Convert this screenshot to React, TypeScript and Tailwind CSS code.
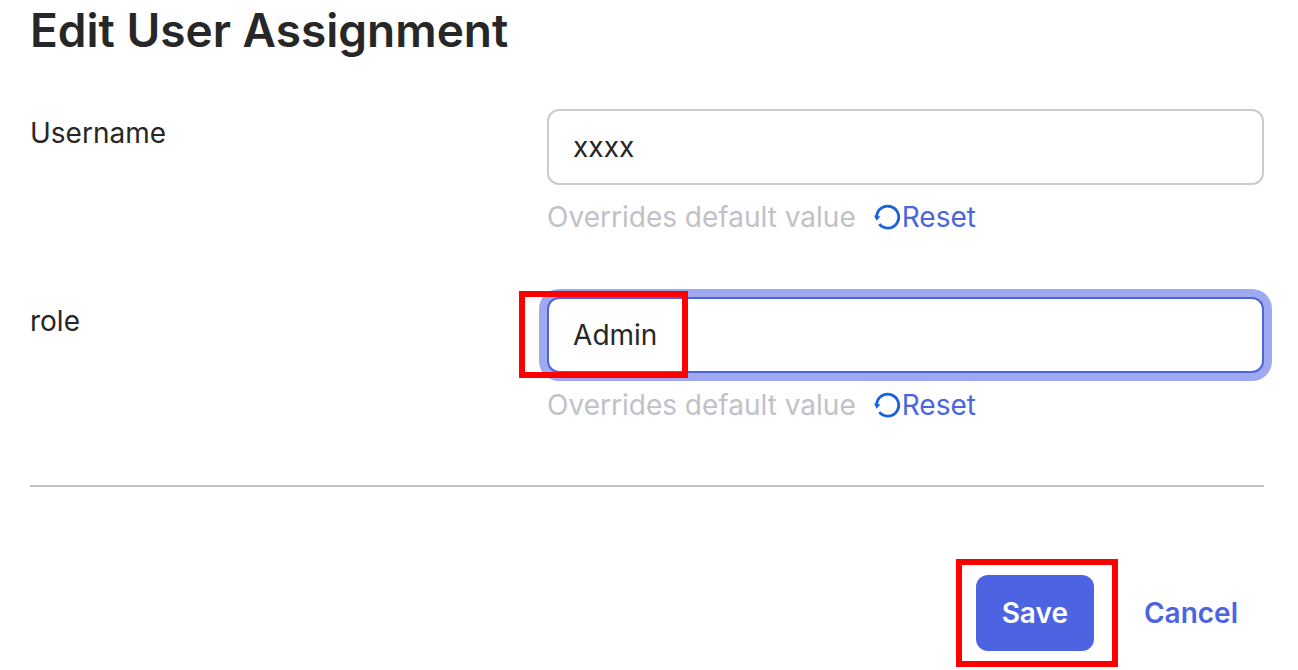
import React, { useState } from "react";

type FieldProps = {
  id: string;
  label: string;
  defaultValue: string;
  focused?: boolean;
  children?: React.ReactNode;
};

function ResetIcon() {
  return (
    <svg
      width="28"
      height="28"
      viewBox="0 0 28 28"
      fill="none"
      aria-hidden="true"
      className="shrink-0"
    >
      <path
        d="M2.7 14A11 11 0 1 1 5.3 21.2"
        stroke="#1662dd"
        strokeWidth="2.8"
      />
      <path d="M0 12.6L6.4 13.6L2.6 17.8Z" fill="#1662dd" />
    </svg>
  );
}

function Field({ id, label, defaultValue, focused, children }: FieldProps) {
  const [value, setValue] = useState(defaultValue);

  return (
    <div className="grid grid-cols-[5fr_7fr] gap-x-[5px]">
      <label htmlFor={id} className="pt-1.5 leading-9">
        {label}
      </label>
      <div>
        <div className="relative">
          <input
            id={id}
            type="text"
            value={value}
            onChange={(e) => setValue(e.target.value)}
            className={`block h-19 w-full rounded-xl border-2 bg-white px-6 outline-none ${
              focused
                ? "border-[#4c64e1] ring-8 ring-[#9ea9f0]"
                : "border-[#cbcbcb]"
            }`}
          />
          {children}
        </div>
        <div className="mt-3.5 flex items-center gap-[18px]">
          <span className="leading-9 text-[#c1c1c8]">
            Overrides default value
          </span>
          <button
            type="button"
            onClick={() => setValue(defaultValue)}
            className="flex items-center leading-9 text-[#4c64e1]"
          >
            <ResetIcon />
            Reset
          </button>
        </div>
      </div>
    </div>
  );
}

export default function App() {
  return (
    <main className="bg-white pr-[34px] pl-[30px] font-['Inter',sans-serif] text-[28px] text-[#272727]">
      <h1 className="text-[46px] leading-[60px] font-semibold">
        Edit User Assignment
      </h1>

      <form onSubmit={(e) => e.preventDefault()}>
        <div className="mt-[49px] flex flex-col gap-[62px]">
          <Field id="username" label="Username" defaultValue="xxxx" />
          <Field id="role" label="role" defaultValue="Admin" focused>
            <div className="pointer-events-none absolute -top-1.5 -left-7 h-[87px] w-[169px] border-6 border-[#ff0000]" />
          </Field>
        </div>

        <hr className="mt-[62px] border-t-2 border-[#c1c3c8]" />

        <div className="mt-22 flex justify-end gap-6 pb-4 font-semibold">
          <div className="relative">
            <button
              type="submit"
              className="h-19 rounded-xl bg-[#4c64e1] px-[26px] text-white"
            >
              Save
            </button>
            <div className="pointer-events-none absolute -top-4 -right-6 -bottom-4 -left-5 border-6 border-[#ff0000]" />
          </div>
          <button type="button" className="h-19 px-[26px] text-[#4c64e1]">
            Cancel
          </button>
        </div>
      </form>
    </main>
  );
}
